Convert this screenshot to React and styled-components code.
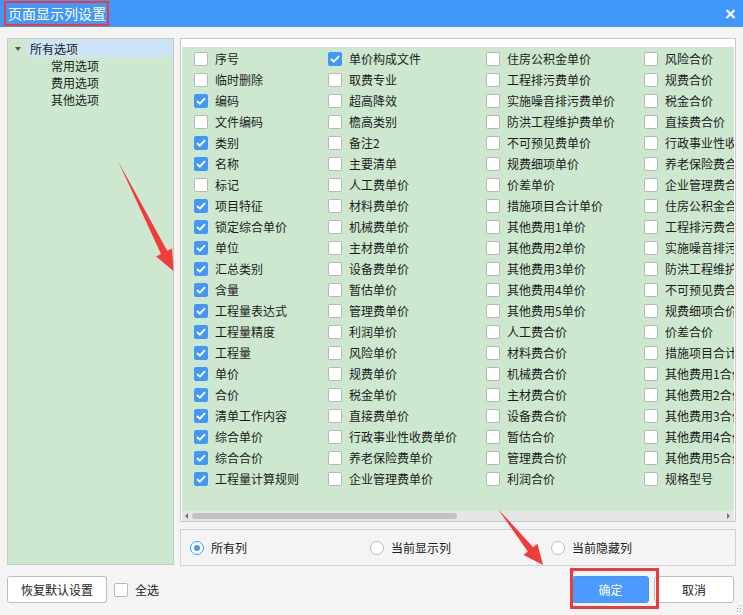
import React, { useState } from "react";
import styled, { createGlobalStyle } from "styled-components";

const GlobalStyle = createGlobalStyle`
  body {
    margin: 0;
    background: #f4f4f4;
    font-family: "Noto Sans CJK SC", "Noto Sans", sans-serif;
    color: #1c1c1c;
  }
`;

const BLUE = "#4297fb";
const GREEN = "#cde8cf";

const Window = styled.div`
  position: relative;
  width: 743px;
  height: 615px;
  background: #f4f4f4;
  overflow: hidden;
`;

const TitleBar = styled.div`
  height: 27px;
  background: ${BLUE};
  display: flex;
  align-items: center;
  justify-content: space-between;
  padding: 0 7px 0 6px;
`;

const Title = styled.span`
  font-size: 14px;
  line-height: 19px;
  color: #fff;
  padding: 1px 1px 1px 2px;
  outline: 2px solid #ee3a3a;
  outline-offset: 0;
`;

const CloseIcon = () => (
  <svg width="11" height="10" viewBox="0 0 11 10">
    <path d="M1.5 1 L9.5 9 M9.5 1 L1.5 9" stroke="#fff" strokeWidth="2.2" />
  </svg>
);

const Main = styled.div`
  display: flex;
  gap: 6px;
  padding: 11px 7px 0 7px;
`;

const TreePanel = styled.div`
  box-sizing: border-box;
  flex: 0 0 167px;
  width: 167px;
  height: 527px;
  border: 1px solid #c9c9c9;
  background: ${GREEN};
  padding-top: 1px;
`;

const TreeRow = styled.div`
  height: 17px;
  display: flex;
  align-items: center;
  font-size: 12px;
  white-space: nowrap;
  padding-left: ${(p) => p.$indent}px;
`;

const TreeLabel = styled.span`
  flex: 1;
  height: 17px;
  line-height: 17px;
  padding-left: 3px;
  background: ${(p) => (p.$selected ? "#cce4f7" : "transparent")};
`;

const Caret = styled.span`
  width: 0;
  height: 0;
  margin: 0 6px 0 7px;
  border-left: 3.5px solid transparent;
  border-right: 3.5px solid transparent;
  border-top: 4px solid #555;
`;

const RightCol = styled.div`
  flex: 1;
  min-width: 0;
  display: flex;
  flex-direction: column;
  gap: 7px;
`;

const GridPanel = styled.div`
  box-sizing: border-box;
  height: 484px;
  border: 1px solid #c9c9c9;
  background: #fff;
  padding: 8px 1px 0 1px;
  display: flex;
  flex-direction: column;
`;

const GridBody = styled.div`
  flex: 1;
  min-width: 0;
  background: ${GREEN};
  overflow: hidden;
  display: flex;
  padding: 1px 0 0 12px;
`;

const Column = styled.div`
  flex: 0 0 ${(p) => p.$w}px;
  display: flex;
  flex-direction: column;
`;

const Item = styled.label`
  height: 21px;
  display: flex;
  align-items: center;
  gap: 7px;
  font-size: 12px;
  white-space: nowrap;
`;

const Box = styled.span`
  box-sizing: border-box;
  flex: 0 0 14px;
  width: 14px;
  height: 14px;
  border-radius: 2px;
  border: 1px solid ${(p) => (p.$on ? BLUE : "#b8b8b8")};
  background: ${(p) => (p.$on ? BLUE : "#fff")};
  display: flex;
  align-items: center;
  justify-content: center;
`;

const Check = ({ on }) => (
  <Box $on={on}>
    {on && (
      <svg width="10" height="8" viewBox="0 0 10 8">
        <path d="M1 4 L3.8 6.6 L9 1.2" fill="none" stroke="#fff" strokeWidth="1.9" />
      </svg>
    )}
  </Box>
);

const HScroll = styled.div`
  height: 10px;
  background: #e6e6e6;
  display: flex;
  align-items: center;
  padding: 0 4px 0 3px;
  gap: 4px;
`;

const Arrow = styled.span`
  width: 0;
  height: 0;
  border-top: 3.5px solid transparent;
  border-bottom: 3.5px solid transparent;
  ${(p) => (p.$dir === "left" ? "border-right: 3px solid #777;" : "border-left: 3px solid #777;")}
`;

const Track = styled.div`
  flex: 1;
  height: 6px;
`;

const Thumb = styled.div`
  width: 265px;
  height: 6px;
  border-radius: 3px;
  background: #c2c2c2;
`;

const RadioGroup = styled.div`
  box-sizing: border-box;
  height: 37px;
  border: 1px solid #d2d2d2;
  display: grid;
  grid-template-columns: 180px 181px 180px;
  align-items: center;
  padding-left: 9px;
`;

const RadioItem = styled.label`
  display: flex;
  align-items: center;
  gap: 7px;
  font-size: 12px;
`;

const Circle = styled.span`
  box-sizing: border-box;
  width: 14px;
  height: 14px;
  border-radius: 50%;
  border: 1px solid ${(p) => (p.$on ? BLUE : "#bcbcbc")};
  background: #fff;
  display: flex;
  align-items: center;
  justify-content: center;
  &::after {
    content: "";
    width: 6px;
    height: 6px;
    border-radius: 50%;
    background: ${(p) => (p.$on ? BLUE : "transparent")};
  }
`;

const Footer = styled.div`
  display: flex;
  align-items: center;
  margin-top: 10px;
  padding: 0 9px 0 7px;
`;

const Button = styled.button`
  box-sizing: border-box;
  height: 27px;
  width: ${(p) => p.$w}px;
  border-radius: 3px;
  border: 1px solid ${(p) => (p.$primary ? BLUE : "#bdbdbd")};
  background: ${(p) => (p.$primary ? "#4a9bfd" : "#fff")};
  color: ${(p) => (p.$primary ? "#fff" : "#1c1c1c")};
  font-family: inherit;
  font-size: 12px;
  padding: 0;
`;

const SelectAll = styled.label`
  display: flex;
  align-items: center;
  gap: 7px;
  margin-left: 7px;
  font-size: 12px;
`;

const Spacer = styled.div`
  flex: 1;
`;

const Marked = styled.div`
  position: relative;
  display: flex;
  margin-right: 5px;
`;

const MarkBox = styled.div`
  position: absolute;
  left: -2px;
  top: -8px;
  width: 89px;
  height: 41px;
  box-sizing: border-box;
  border: 3px solid #ee3a3a;
  pointer-events: none;
`;

const Overlay = styled.svg`
  position: absolute;
  left: 0;
  top: 0;
  pointer-events: none;
`;

const Grip = styled.svg`
  position: absolute;
  right: 1px;
  bottom: 2px;
`;

const columns = [
  {
    w: 134,
    items: [
      ["序号", 0], ["临时删除", 0], ["编码", 1], ["文件编码", 0], ["类别", 1],
      ["名称", 1], ["标记", 0], ["项目特征", 1], ["锁定综合单价", 1], ["单位", 1],
      ["汇总类别", 1], ["含量", 1], ["工程量表达式", 1], ["工程量精度", 1], ["工程量", 1],
      ["单价", 1], ["合价", 1], ["清单工作内容", 1], ["综合单价", 1], ["综合合价", 1],
      ["工程量计算规则", 1],
    ],
  },
  {
    w: 158,
    items: [
      ["单价构成文件", 1], ["取费专业", 0], ["超高降效", 0], ["檐高类别", 0], ["备注2", 0],
      ["主要清单", 0], ["人工费单价", 0], ["材料费单价", 0], ["机械费单价", 0], ["主材费单价", 0],
      ["设备费单价", 0], ["暂估单价", 0], ["管理费单价", 0], ["利润单价", 0], ["风险单价", 0],
      ["规费单价", 0], ["税金单价", 0], ["直接费单价", 0], ["行政事业性收费单价", 0],
      ["养老保险费单价", 0], ["企业管理费单价", 0],
    ],
  },
  {
    w: 158,
    items: [
      ["住房公积金单价", 0], ["工程排污费单价", 0], ["实施噪音排污费单价", 0],
      ["防洪工程维护费单价", 0], ["不可预见费单价", 0], ["规费细项单价", 0], ["价差单价", 0],
      ["措施项目合计单价", 0], ["其他费用1单价", 0], ["其他费用2单价", 0], ["其他费用3单价", 0],
      ["其他费用4单价", 0], ["其他费用5单价", 0], ["人工费合价", 0], ["材料费合价", 0],
      ["机械费合价", 0], ["主材费合价", 0], ["设备费合价", 0], ["暂估合价", 0],
      ["管理费合价", 0], ["利润合价", 0],
    ],
  },
  {
    w: 200,
    items: [
      ["风险合价", 0], ["规费合价", 0], ["税金合价", 0], ["直接费合价", 0],
      ["行政事业性收费合价", 0], ["养老保险费合价", 0], ["企业管理费合价", 0],
      ["住房公积金合价", 0], ["工程排污费合价", 0], ["实施噪音排污费合价", 0],
      ["防洪工程维护费合价", 0], ["不可预见费合价", 0], ["规费细项合价", 0], ["价差合价", 0],
      ["措施项目合计合价", 0], ["其他费用1合价", 0], ["其他费用2合价", 0], ["其他费用3合价", 0],
      ["其他费用4合价", 0], ["其他费用5合价", 0], ["规格型号", 0],
    ],
  },
];

const radios = ["所有列", "当前显示列", "当前隐藏列"];

function App() {
  const [mode] = useState(0);

  return (
    <>
      <GlobalStyle />
      <Window>
        <TitleBar>
          <Title>页面显示列设置</Title>
          <CloseIcon />
        </TitleBar>

        <Main>
          <TreePanel>
            <TreeRow $indent={0}>
              <Caret />
              <TreeLabel $selected>所有选项</TreeLabel>
            </TreeRow>
            <TreeRow $indent={40}><TreeLabel>常用选项</TreeLabel></TreeRow>
            <TreeRow $indent={40}><TreeLabel>费用选项</TreeLabel></TreeRow>
            <TreeRow $indent={40}><TreeLabel>其他选项</TreeLabel></TreeRow>
          </TreePanel>

          <RightCol>
            <GridPanel>
              <GridBody>
                {columns.map((col, i) => (
                  <Column key={i} $w={col.w}>
                    {col.items.map(([name, on]) => (
                      <Item key={name}>
                        <Check on={!!on} />
                        {name}
                      </Item>
                    ))}
                  </Column>
                ))}
              </GridBody>
              <HScroll>
                <Arrow $dir="left" />
                <Track><Thumb /></Track>
                <Arrow $dir="right" />
              </HScroll>
            </GridPanel>

            <RadioGroup>
              {radios.map((r, i) => (
                <RadioItem key={r}>
                  <Circle $on={mode === i} />
                  {r}
                </RadioItem>
              ))}
            </RadioGroup>
          </RightCol>
        </Main>

        <Footer>
          <Button $w={100}>恢复默认设置</Button>
          <SelectAll>
            <Check on={false} />
            全选
          </SelectAll>
          <Spacer />
          <Marked>
            <Button $primary $w={77}>确定</Button>
            <MarkBox />
          </Marked>
          <Button $w={80}>取消</Button>
        </Footer>

        <Overlay width="743" height="615" viewBox="0 0 743 615">
          <polygon
            points="118,161 167.2,250.8 172.1,248.4 173.5,271 156.1,256.4 161,254"
            fill="#f23b3b"
          />
          <polygon
            points="498,509 533.2,547.2 537.5,543.8 543,565 523.5,555 527.8,551.6"
            fill="#f23b3b"
          />
        </Overlay>

        <Grip width="6" height="8" viewBox="0 0 6 8">
          <rect x="4" y="0" width="1" height="1" fill="#999" />
          <rect x="4" y="3" width="1" height="1" fill="#999" />
          <rect x="1" y="3" width="1" height="1" fill="#999" />
          <rect x="4" y="6" width="1" height="1" fill="#999" />
          <rect x="1" y="6" width="1" height="1" fill="#999" />
        </Grip>
      </Window>
    </>
  );
}

export default App;
